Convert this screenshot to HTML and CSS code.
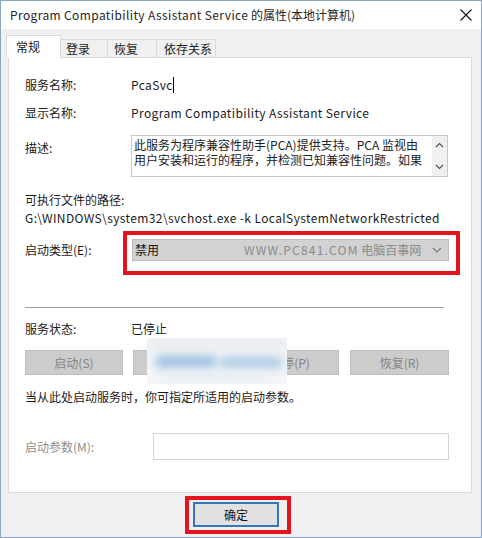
FILE: index.html
```
<!DOCTYPE html>
<html lang="zh-CN">
<head>
<meta charset="utf-8">
<title>Program Compatibility Assistant Service 的属性</title>
<link rel="stylesheet" href="styles.css">
</head>
<body>
<div class="window">
  <div class="titlebar">
    <span class="title"><span class="lat">Program Compatibility Assistant Service</span> 的属性(本地计算机)</span>
    <svg class="close" width="12" height="12" viewBox="0 0 12 12"><path d="M0.5 0.5 L11.5 11.5 M11.5 0.5 L0.5 11.5" stroke="#111" stroke-width="1.1" fill="none"/></svg>
  </div>
  <div class="tabs">
    <div class="tab active t1">常规</div>
    <div class="tab t2">登录</div>
    <div class="tab t3">恢复</div>
    <div class="tab t4">依存关系</div>
  </div>
  <div class="panel">
    <div class="row">
      <span class="label">服务名称:</span>
      <span class="value lat">PcaSvc<span class="caret"></span></span>
    </div>
    <div class="row r2">
      <span class="label">显示名称:</span>
      <span class="value lat">Program Compatibility Assistant Service</span>
    </div>
    <div class="row r3">
      <span class="label desc-label">描述:</span>
      <div class="desc">
        <div class="desc-text">此服务为程序兼容性助手(PCA)提供支持。PCA 监视由<br>用户安装和运行的程序，并检测已知兼容性问题。如果</div>
        <div class="scroll">
          <svg width="9" height="6" viewBox="0 0 9 6"><path d="M1 5 L4.5 1.5 L8 5" stroke="#555" stroke-width="1.2" fill="none"/></svg>
          <svg width="9" height="6" viewBox="0 0 9 6"><path d="M1 1 L4.5 4.5 L8 1" stroke="#555" stroke-width="1.2" fill="none"/></svg>
        </div>
      </div>
    </div>
    <div class="pathlabel">可执行文件的路径:</div>
    <div class="path lat">G:\WINDOWS\system32\svchost.exe -k LocalSystemNetworkRestricted</div>
    <div class="row r4">
      <span class="label">启动类型(E):</span>
      <div class="combo-wrap">
        <div class="combo">
          <span class="combo-text">禁用</span>
          <span class="wm"><span class="wm-lat">WWW.PC841.COM</span> 电脑百事网</span>
          <svg class="chev" width="10" height="6" viewBox="0 0 10 6"><path d="M1 1 L5 5 L9 1" stroke="#777" stroke-width="1.1" fill="none"/></svg>
        </div>
        <div class="redframe combo-frame"></div>
      </div>
    </div>
    <div class="sep"></div>
    <div class="row r5">
      <span class="label">服务状态:</span>
      <span class="value">已停止</span>
    </div>
    <div class="buttons">
      <div class="btn">启动(S)</div>
      <div class="btn">停止(T)</div>
      <div class="btn">暂停(P)</div>
      <div class="btn">恢复(R)</div>
      <div class="blur">
        <div class="b b1"></div>
        <div class="b b2"></div>
        <div class="b b3"></div>
        <div class="b b4"></div>
      </div>
    </div>
    <div class="hint">当从此处启动服务时，你可指定所适用的启动参数。</div>
    <div class="row r6">
      <span class="label param-label">启动参数(M):</span>
      <div class="input"></div>
    </div>
  </div>
  <div class="footer">
    <div class="ok-wrap">
      <div class="ok">确定</div>
      <div class="redframe ok-frame"></div>
    </div>
  </div>
</div>
</body>
</html>
```
FILE: styles.css
```
* { box-sizing: border-box; }
html, body { margin: 0; padding: 0; background: #fff; }
body {
  font-family: "Noto Sans CJK SC", "Noto Sans", sans-serif;
  font-size: 12px;
  line-height: 16px;
  color: #1a1a1a;
}
.lat { letter-spacing: 0.38px; }
.window {
  width: 482px;
  height: 538px;
  border: 1px solid #8aa6c6;
  background: #f0f0f0;
  display: flex;
  flex-direction: column;
  overflow: hidden;
}
.titlebar {
  height: 28px;
  flex-shrink: 0;
  background: #fff;
  display: flex;
  align-items: center;
  justify-content: space-between;
  padding: 0 9px 0 9px;
}
.title { color: #262626; white-space: nowrap; }
.close { display: block; margin-top: -1px; }

.tabs {
  height: 28px;
  flex-shrink: 0;
  display: flex;
  align-items: flex-end;
  padding-left: 5px;
}
.tab {
  height: 18px;
  border: 1px solid #d9d9d9;
  border-bottom: none;
  background: #f0f0f0;
  line-height: 17px;
  margin-left: -1px;
  white-space: nowrap;
}
.tab.active {
  height: 23px;
  background: #fff;
  margin-bottom: -1px;
  position: relative;
  z-index: 1;
  margin-left: 0;
  line-height: 21px;
}
.t1 { width: 55px; padding-left: 9px; }
.t2 { width: 48px; padding-left: 5px; }
.t3 { width: 50px; padding-left: 6px; }
.t4 { width: 60px; padding-left: 7px; }

.panel {
  margin-left: 7px;
  width: 464px;
  height: 436px;
  flex-shrink: 0;
  border: 1px solid #d9d9d9;
  background: #fff;
  padding: 19px 0 0 16px;
}
.row { display: flex; align-items: center; }
.label { width: 106px; flex-shrink: 0; }
.value { white-space: nowrap; }
.caret {
  display: inline-block;
  width: 1px;
  height: 16px;
  background: #000;
  vertical-align: top;
  margin-left: 0;
}
.r2 { margin-top: 12px; }
.r3 { margin-top: 14px; align-items: flex-start; }
.desc-label { margin-top: 5px; }
.desc {
  width: 317px;
  height: 42px;
  border: 1px solid #c8c8c8;
  display: flex;
  background: #fff;
}
.desc-text {
  flex: 1;
  min-width: 0;
  padding: 1px 0 0 2px;
  line-height: 15px;
  white-space: nowrap;
  overflow: hidden;
  color: #222;
}
.scroll {
  width: 15px;
  flex-shrink: 0;
  background: #f0f0f0;
  display: flex;
  flex-direction: column;
  align-items: center;
  justify-content: space-between;
  padding: 6px 0 6px;
}
.scroll svg { display: block; }
.pathlabel { margin-top: 15px; }
.path { margin-top: 2px; white-space: nowrap; }

.r4 { margin-top: 13px; }
.combo-wrap { position: relative; margin-left: 1px; }
.combo {
  width: 317px;
  height: 22px;
  background: #d2d2d2;
  border: 1px solid #bdbdbd;
  display: flex;
  align-items: center;
  padding: 0 0 0 2px;
}
.combo-text { color: #111; }
.wm { margin-left: 85px; color: #8a8a8a; white-space: nowrap; }
.wm-lat { letter-spacing: 1.2px; }
.chev { margin-left: auto; margin-right: 6px; display: block; }
.redframe {
  position: absolute;
  border: 4px solid #e3141c;
  pointer-events: none;
}
.combo-frame { left: -9px; right: -11px; top: -8px; bottom: -14px; }

.sep {
  margin-top: 46px;
  width: 419px;
  height: 1px;
  background: #a0a0a0;
}
.r5 { margin-top: 13px; }
.buttons {
  margin-top: 13px;
  display: flex;
  gap: 10px;
  position: relative;
}
.btn {
  width: 98px;
  height: 25px;
  background: #cccccc;
  border: 1px solid #bfbfbf;
  color: #838383;
  display: flex;
  align-items: center;
  justify-content: center;
}
.buttons .btn:nth-child(4) { width: 99px; margin-left: 1px; }
.blur {
  position: absolute;
  left: 122px;
  top: -12px;
  width: 140px;
  height: 46px;
  background: #f3f5f7;
  overflow: hidden;
}
.b { position: absolute; filter: blur(5px); border-radius: 6px; }
.b1 { left: 8px; top: 17px; width: 62px; height: 13px; background: #9dc2e2; }
.b2 { left: 72px; top: 19px; width: 64px; height: 11px; background: #a9c9e4; }
.b3 { left: 0px; top: 0px; width: 140px; height: 10px; background: #e8ebee; }
.b4 { left: 20px; top: 34px; width: 100px; height: 8px; background: #e6edf4; }

.hint { margin-top: 14px; white-space: nowrap; }
.r6 { margin-top: 28px; }
.param-label { width: 128px; color: #8e8e8e; }
.input {
  width: 296px;
  height: 27px;
  border: 1px solid #d4d4d4;
  background: #fff;
}

.footer { flex: 1; padding: 9px 0 0 192px; }
.ok-wrap { position: relative; width: 86px; }
.ok {
  width: 86px;
  height: 25px;
  background: #e1e1e1;
  border: 2px solid #3477b8;
  display: flex;
  align-items: center;
  justify-content: center;
  color: #111;
}
.ok-frame { left: -8px; right: -12px; top: -6px; bottom: -7px; }
```
